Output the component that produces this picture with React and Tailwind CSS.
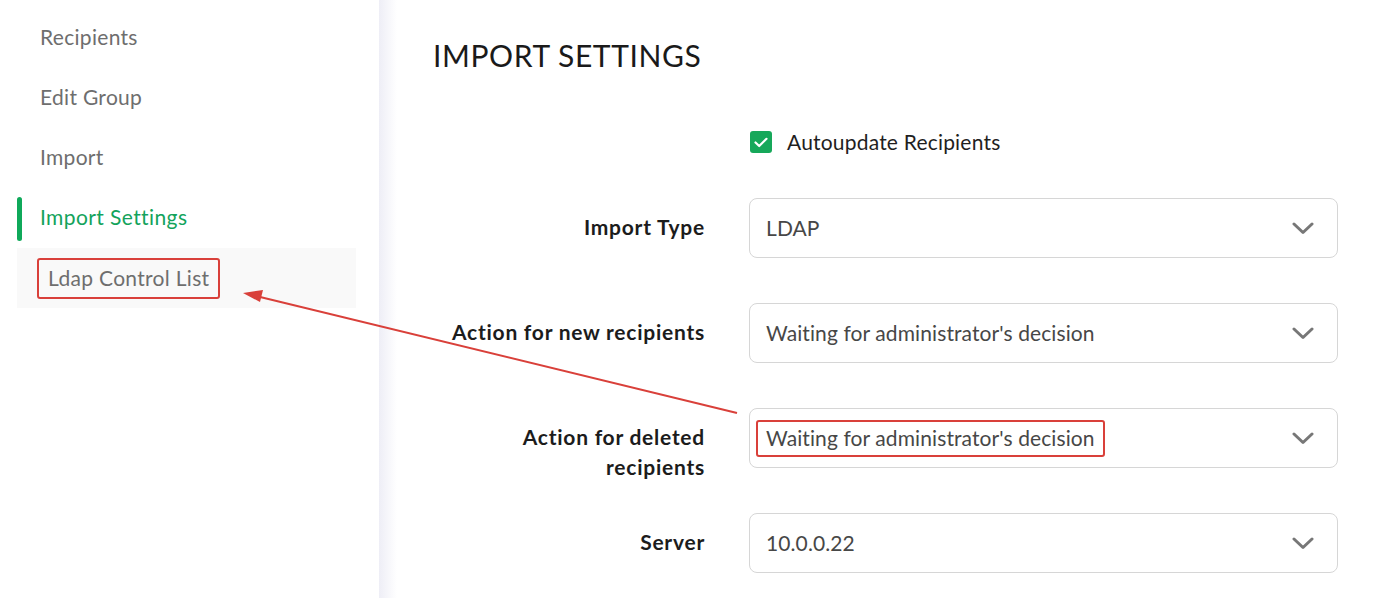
import React from "react";

const font = { fontFamily: "Lato, 'Noto Sans', sans-serif" };

function Chevron() {
  return (
    <svg width="22" height="13" viewBox="0 0 22 13" className="shrink-0">
      <polyline points="2,2 11,10.5 20,2" fill="none" stroke="#777" strokeWidth="3" strokeLinecap="round" strokeLinejoin="round" />
    </svg>
  );
}

function Select({ children }) {
  return (
    <div className="w-[589px] h-[60px] shrink-0 rounded-[8px] border border-[#d6d6d6] bg-white flex items-center justify-between pl-[16px] pr-[23px] text-[21px] tracking-[0.1px] text-[#474747]">
      <div className="flex items-center">{children}</div>
      <Chevron />
    </div>
  );
}

function Row({ label, children }) {
  return (
    <div className="flex h-[60px] items-start">
      <div className="w-[326px] shrink-0 text-right font-bold text-[21px] tracking-[0.75px] leading-[30px] pt-[14px] text-[#1c1c1c]">{label}</div>
      <div className="ml-[44px]">{children}</div>
    </div>
  );
}

export default function App() {
  const nav = ["Recipients", "Edit Group", "Import"];
  return (
    <div className="relative w-[1391px] h-[598px] overflow-hidden bg-white flex" style={font}>
      <aside className="w-[379px] shrink-0 pt-[7px] bg-white">
        {nav.map((n) => (
          <div key={n} className="ml-[17px] w-[339px] h-[60px] flex items-center pl-[23px] text-[21px] tracking-[0.3px] text-[#6e6e6e]">{n}</div>
        ))}
        <div className="relative ml-[17px] w-[339px] h-[60px] flex items-center pl-[23px] text-[21px] tracking-[0.4px] text-[#13a35c]">
          <div className="absolute left-0 top-[10px] w-[5px] h-[44px] rounded-full bg-[#0fa95a]" />
          Import Settings
        </div>
        <div className="ml-[17px] w-[339px] h-[60px] mt-[1px] flex items-center pl-[20px] bg-[#f9f9f9] text-[21px] tracking-[0.3px] text-[#6e6e6e]">
          <span className="inline-flex items-center h-[41px] px-[9px] border-2 border-[#d9403a] rounded-[3px]">Ldap Control List</span>
        </div>
      </aside>
      <main className="relative flex-1">
        <div className="absolute left-0 top-0 h-full w-[18px] bg-gradient-to-r from-[#eeeef6] to-white" />
        <div className="relative pl-[54px] pt-[37px]">
          <h1 className="text-[30px] leading-[36px] tracking-[0.6px] text-[#1a1a1a]">IMPORT SETTINGS</h1>
          <div className="mt-[58px] flex items-center h-[22px] ml-[317px]">
            <div className="w-[22px] h-[22px] rounded-[3px] bg-[#16a85a] flex items-center justify-center">
              <svg width="14" height="11" viewBox="0 0 14 11">
                <polyline points="1.5,5.5 5.2,9 12.5,1.8" fill="none" stroke="white" strokeWidth="2.2" strokeLinecap="round" strokeLinejoin="round" />
              </svg>
            </div>
            <span className="ml-[15px] text-[21px] tracking-[0.2px] text-[#1f1f1f]">Autoupdate Recipients</span>
          </div>
          <div className="mt-[45px] flex flex-col gap-[45px] ml-[-54px]">
            <Row label="Import Type"><Select>LDAP</Select></Row>
            <Row label="Action for new recipients"><Select>Waiting for administrator's decision</Select></Row>
            <Row label={<>Action for deleted<br />recipients</>}>
              <Select>
                <span className="ml-[-10px] inline-flex items-center h-[37px] px-[8px] border-2 border-[#d9403a] rounded-[3px]">Waiting for administrator's decision</span>
              </Select>
            </Row>
            <Row label="Server"><Select>10.0.0.22</Select></Row>
          </div>
        </div>
      </main>
      <svg className="absolute left-0 top-0 pointer-events-none" width="1391" height="598">
        <line x1="737" y1="413" x2="256" y2="296" stroke="#d9403a" strokeWidth="2" />
        <polygon points="243,293 263,290 260,302" fill="#d9403a" />
      </svg>
    </div>
  );
}
